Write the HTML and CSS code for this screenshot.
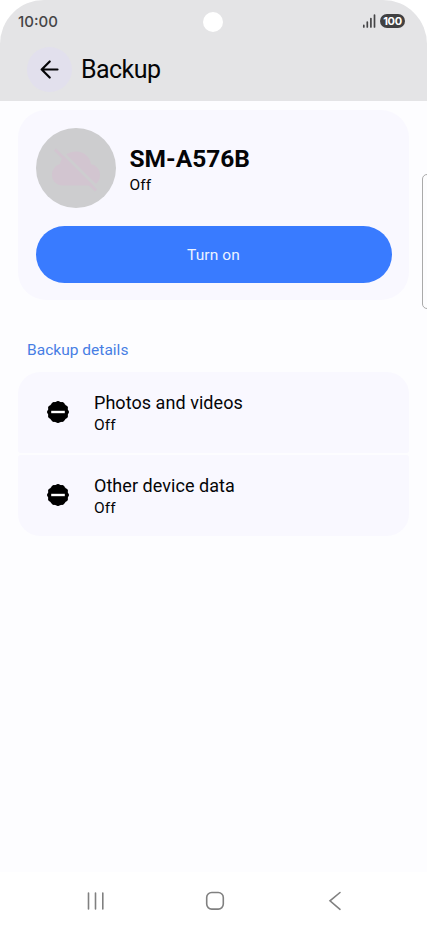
FILE: index.html
```html
<!DOCTYPE html>
<html lang="en">
<head>
<meta charset="utf-8">
<title>Backup</title>
<link rel="stylesheet" href="styles.css">
</head>
<body>
<div class="screen">
  <header class="top">
    <div class="status">
      <span class="time">10:00</span>
      <span class="camera"></span>
      <span class="indicators">
        <svg class="signal" width="14" height="14" viewBox="0 0 14 14"><path d="M1.800 13v-1.600M5.300 13V8M8.900 13V4.500M12.500 13V1"/></svg>
        <span class="battery">100</span>
      </span>
    </div>
    <div class="appbar">
      <span class="back"><svg width="20" height="20" viewBox="0 0 20 20"><path d="M17.500 9.500H1.700M9.700 1.500L1.700 9.500l8 8"/></svg></span>
      <h1>Backup</h1>
    </div>
  </header>
  <main>
    <section class="card">
      <div class="device">
        <span class="avatar">
          <svg width="50" height="48" viewBox="0 0 50 48"><path class="cloud" d="M12 41.500C5.500 41.500 1 37 1 31C1 25.500 4 21.500 9 20C10.500 12.500 17 7.500 25 7.500C33 7.500 39 13 40 20C45.500 21.500 49 25.500 49 31C49 37 45 41.500 39 41.500Z"/><path class="gap" d="M8.300 5.500L49.300 46.500"/><path class="slash" d="M4 5.500L45 46.500"/></svg>
        </span>
        <div class="info"><h2>SM-A576B</h2><p>Off</p></div>
      </div>
      <button class="turn-on"><span>Turn on</span></button>
    </section>
    <h3><span>Backup details</span></h3>
    <div class="list">
      <div class="row">
        <svg class="badge" width="22" height="22" viewBox="0 0 22 22"><circle cx="11" cy="11" r="10.400"/><circle class="lobes" cx="11" cy="11" r="9" pathLength="12"/><path class="bar" d="M4.200 11h13.600"/></svg>
        <div><h4>Photos and videos</h4><p>Off</p></div>
      </div>
      <div class="row">
        <svg class="badge" width="22" height="22" viewBox="0 0 22 22"><circle cx="11" cy="11" r="10.400"/><circle class="lobes" cx="11" cy="11" r="9" pathLength="12"/><path class="bar" d="M4.200 11h13.600"/></svg>
        <div><h4>Other device data</h4><p>Off</p></div>
      </div>
    </div>
  </main>
  <nav>
    <svg width="20" height="20" viewBox="0 0 20 20"><path d="M3.500 2v16M10.500 2v16M17.800 2v16"/></svg>
    <svg width="20" height="20" viewBox="0 0 20 20"><rect x="1.700" y="1.500" width="16.600" height="16.600" rx="5"/></svg>
    <svg width="20" height="20" viewBox="0 0 20 20"><path d="M15 1.500L5 9.800l10 8.500"/></svg>
  </nav>
  <div class="edge-panel"></div>
</div>
</body>
</html>
```
FILE: styles.css
```css
* { box-sizing: border-box; }
body { margin: 0; background: #fff; font-family: Roboto, sans-serif; color: #050507; }
h1, h2, h3, h4, p { margin: 0; font-weight: 400; }
svg { display: block; fill: none; flex: none; }
.screen { position: relative; width: 427px; height: 926px; overflow: hidden; border-radius: 44px 44px 0 0; background: #fdfdff; display: flex; flex-direction: column; }
.top { height: 101px; background: #e4e4e6; flex: none; }
.status { height: 42px; display: grid; grid-template-columns: 1fr 20px 1fr; align-items: center; padding: 0 22px 0 18px; }
.time { font: 500 15px/20px Inter, sans-serif; color: #454547; letter-spacing: 0; padding-top: 1px; }
.camera { width: 20px; height: 20px; border-radius: 50%; background: #fff; position: relative; left: 1.500px; top: .5px; }
.indicators { display: flex; justify-content: flex-end; align-items: center; gap: 4px; }
.signal { stroke: #454547; stroke-width: 1.700; stroke-linecap: round; }
.battery { width: 25px; height: 14px; border-radius: 7px; background: #404042; color: #fff; font: 700 11px/14px Inter, sans-serif; letter-spacing: -.3px; text-align: center; }
.appbar { display: flex; align-items: center; height: 55px; padding-left: 27px; }
.back { width: 45px; height: 45px; border-radius: 50%; background: #e2e0ed; display: flex; align-items: center; justify-content: center; }
.back svg { stroke: #050507; stroke-width: 2.200; stroke-linecap: round; stroke-linejoin: round; }
h1 { font-size: 25px; line-height: 30px; margin: 1px 0 0 9px; letter-spacing: -.55px; }
main { flex: 1; padding: 9px 18px 0; }
.card { height: 190px; border-radius: 28px; background: #f9f8ff; padding: 17.500px; }
.device { display: flex; height: 80px; }
.avatar { width: 80.500px; height: 80.500px; flex: none; border-radius: 50%; background: #cdcdcf; display: flex; align-items: center; justify-content: center; margin-right: 13.500px; }
.cloud { fill: #d2c5d0; }
.gap { stroke: #cdcdcf; stroke-width: 3; }
.slash { stroke: #d2c5d0; stroke-width: 3; }
.info { padding-top: 16.500px; }
h2 { font-size: 24.500px; line-height: 30px; font-weight: 700; }
.info p { font-size: 15.500px; line-height: 22px; letter-spacing: .1px; }
.turn-on { display: block; width: 356px; height: 56.500px; margin-top: 18.500px; padding: 0; border: 0; border-radius: 29px; background: #397bff; color: #edf3ff; font: 400 15.500px/58px Roboto, sans-serif; letter-spacing: .1px; }
h3 { margin: 40px 0 0 9px; font-size: 15.500px; line-height: 20px; color: #477ee4; letter-spacing: .02px; }
.list { margin-top: 12px; display: flex; flex-direction: column; gap: 2px; }
.row { height: 81px; background: #f9f8ff; border-radius: 3px; display: flex; align-items: center; padding-left: 29px; gap: 25px; }
.row > div { padding-top: 2px; }
.row:first-child { border-radius: 22px 22px 3px 3px; }
.row:last-child { border-radius: 3px 3px 22px 22px; }
.badge { fill: #000; position: relative; top: -.5px; }
.lobes { stroke: #000; stroke-width: 4; stroke-linecap: round; stroke-dasharray: .01 .99; }
.bar { stroke: #fff; stroke-width: 2.400; }
h4 { font-size: 18px; line-height: 24px; letter-spacing: .05px; }
.row p { font-size: 15.500px; line-height: 21px; letter-spacing: .1px; }
nav { height: 54px; flex: none; background: #fff; display: flex; align-items: center; justify-content: space-between; padding: 4px 82px 0 85px; }
nav svg { stroke: #808080; stroke-width: 1.600; stroke-linecap: round; }
.edge-panel { position: absolute; left: 422px; top: 174px; width: 14px; height: 135px; border: 1px solid #aaa; border-radius: 5px; background: #fdfdfe; }
```
